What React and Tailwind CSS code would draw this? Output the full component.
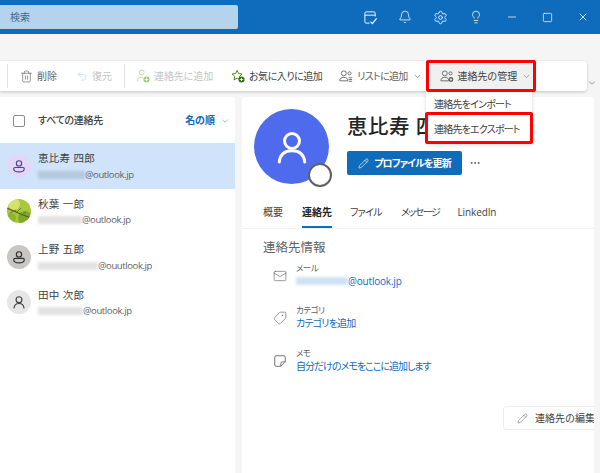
import React from "react";
import { Bell, ChevronDown, Ellipsis, Lightbulb, Mail, Minus, Pencil, Settings, Square, Tag, Trash2, Undo2, X } from "lucide-react";

const font = { fontFamily: '"Open Sans", "Noto Sans CJK JP", sans-serif' };

const PersonIcon = ({ className, strokeWidth = 1.5 }) => (
  <svg viewBox="0 0 24 24" fill="none" stroke="currentColor" strokeWidth={strokeWidth} strokeLinecap="round" className={className}>
    <circle cx="12" cy="8" r="5" />
    <path d="M3.500 22c.5-5 3-7.500 8.500-7.500s8 2.500 8.500 7.500" />
  </svg>
);

const BadgeIcon = ({ className }) => (
  <svg viewBox="0 0 24 24" fill="none" stroke="currentColor" strokeWidth="2" className={className}>
    <circle cx="12" cy="7.500" r="4.500" />
    <path d="M5 14.500h14a2 2 0 0 1 2 2c0 3.500-4 5.500-9 5.500s-9-2-9-5.500a2 2 0 0 1 2-2z" />
  </svg>
);

const PeopleAdd = ({ color, plus, className }) => (
  <svg viewBox="0 0 16 16" fill="none" stroke={color} strokeWidth="1" className={className}>
    <circle cx="6.500" cy="4" r="2.800" />
    <path d="M1.500 14c0-3 1.500-4.500 5-4.500 1 0 1.500.1 2 .3" />
    <circle cx="12" cy="12" r="3.500" fill={plus} stroke="none" />
    <path d="M12 10v4M10 12h4" stroke="#fff" />
  </svg>
);

const StarAdd = ({ className }) => (
  <svg viewBox="0 0 16 16" fill="none" className={className}>
    <path d="M7 1.500l1.700 3.700 4 .5-3 2.700.8 4-3.500-2-3.500 2 .8-4-3-2.700 4-.5z" stroke="#498205" strokeWidth="1.100" strokeLinejoin="round" />
    <circle cx="12" cy="12" r="3.500" fill="#2e6b10" />
    <path d="M12 10v4M10 12h4" stroke="#fff" />
  </svg>
);

const PeopleList = ({ className, gear }) => (
  <svg viewBox="0 0 16 16" fill="none" stroke="#616161" strokeWidth="1" className={className}>
    <circle cx="5.500" cy="5" r="2.800" />
    <path d="M1 13.500c0-2.500 1.500-4 4.500-4s4.500 1.500 4.500 4z" />
    <circle cx="12" cy="5" r="1.800" />
    {gear ? <circle cx="12.500" cy="12" r="2" strokeWidth="1.500" /> : <path d="M11 10h4M11 12h4M11 14h4" />}
  </svg>
);

const NoteCheck = ({ className }) => (
  <svg viewBox="0 0 16 16" fill="none" stroke="currentColor" strokeWidth="1" className={className}>
    <path d="M7 14H3.500A1.500 1.500 0 0 1 2 12.500v-9A1.500 1.500 0 0 1 3.500 2h8A1.500 1.500 0 0 1 13 3.500V7M2 5.500h11" />
    <path d="M8 12.500l2 2 4.500-5.500" strokeWidth="1.200" />
  </svg>
);

const StickyNote = ({ className }) => (
  <svg viewBox="0 0 16 16" fill="none" stroke="currentColor" strokeWidth="1" className={className}>
    <path d="M3.500 2h9A1.500 1.500 0 0 1 14 3.500V9l-5 5H3.500A1.500 1.500 0 0 1 2 12.500v-9A1.500 1.500 0 0 1 3.500 2z" />
    <path d="M14 9h-3.500A1.500 1.500 0 0 0 9 10.500V14" />
  </svg>
);

const LeafPhoto = () => (
  <svg viewBox="0 0 24 24" className="w-full h-full">
    <rect width="24" height="24" fill="#a6c83a" />
    <circle cx="7" cy="5" r="6" fill="#d3e26a" />
    <circle cx="18" cy="19" r="7" fill="#7fa82a" />
    <circle cx="4" cy="19" r="5" fill="#8fb52e" />
    <path d="M0 9l9 4 7 3 8 3" stroke="#5a5f2c" strokeWidth="1.200" fill="none" />
    <path d="M3 14l6-3M10 13l4-4M15 16l4-3" stroke="#6a6b34" strokeWidth="0.800" fill="none" />
  </svg>
);

const Blur = ({ w, color = "bg-[#e2e2e2]" }) => (
  <span className={`inline-block h-[8px] ${w} ${color} blur-[1.5px]`}></span>
);

const contacts = [
  { name: "恵比寿 四郎", blur: "w-[47px]", mail: "@outlook.jp", active: true, avatar: "bg-[#e3d7f6] text-[#4f3f9e]", icon: "badge" },
  { name: "秋葉 一郎", blur: "w-[44px]", mail: "@outlook.jp", avatar: "", icon: "photo" },
  { name: "上野 五郎", blur: "w-[60px]", mail: "@ouutlook.jp", avatar: "bg-[#c8c6c4] text-[#323130]", icon: "badge" },
  { name: "田中 次郎", blur: "w-[45px]", mail: "@outlook.jp", avatar: "bg-[#e6e6e6] text-[#424242]", icon: "person" },
];

const ContactRow = ({ c }) => (
  <div className={`h-[45.5px] flex items-center pl-[7px] ${c.active ? "bg-[#cfe4fa]" : "bg-white"}`}>
    <div className={`w-6 h-6 rounded-full overflow-hidden flex items-center justify-center shrink-0 ${c.avatar}`}>
      {c.icon === "photo" && <LeafPhoto />}
      {c.icon === "badge" && <BadgeIcon className="w-[14px] h-[14px]" />}
      {c.icon === "person" && <PersonIcon className="w-[14px] h-[14px]" strokeWidth={2} />}
    </div>
    <div className="ml-[7px] pt-[2px]">
      <div className="text-[10.5px] leading-[15px] text-[#424242] tracking-[0.3px]">{c.name}</div>
      <div className="flex items-center h-[16px] pt-[1px] text-[9.5px] text-[#616161] tracking-[-0.4px]">
        <Blur w={c.blur} color={c.active ? "bg-[#b5c8dc]" : "bg-[#e2e2e2]"} />
        <span>{c.mail}</span>
      </div>
    </div>
  </div>
);

const ToolItem = ({ icon, label, className = "", chevron, text = "text-[#424242]" }) => (
  <div className={`flex items-center shrink-0 ${className}`}>
    {icon}
    <span className={`ml-[4px] text-[10px] [font-feature-settings:'palt'] ${text}`}>{label}</span>
    {chevron && <ChevronDown className="w-[9px] h-[9px] ml-[5px] text-[#616161]" strokeWidth={1.5} />}
  </div>
);

const InfoRow = ({ icon, label, children, className = "", text = "tracking-[-0.8px]" }) => (
  <div className={`flex ${className}`}>
    <div className="w-[33px] pl-[10px] pt-[7px] text-[#616161]">{icon}</div>
    <div>
      <div className="text-[8.5px] leading-[11px] text-[#616161] tracking-[-0.5px] [font-feature-settings:'palt']">{label}</div>
      <div className={`text-[10px] leading-[16px] text-[#0f6cbd] flex items-center [font-feature-settings:'palt'] ${text}`}>{children}</div>
    </div>
  </div>
);

const Tab = ({ label, active, className = "" }) => (
  <div className={`relative h-[25px] pb-[6px] flex items-center text-[10px] [font-feature-settings:'palt'] ${active ? "text-[#242424] font-semibold" : "text-[#424242]"} ${className}`}>
    {label}
    {active && <div className="absolute left-0 right-0 bottom-0 h-[2px] bg-[#0f6cbd]"></div>}
  </div>
);

export default function App() {
  return (
    <div className="relative w-[600px] h-[473px] overflow-hidden bg-[#f5f5f5]" style={font}>
      <div className="h-[34px] bg-[#0f6cbd] flex items-center text-white">
        <div className="w-[238px] h-[24px] bg-[#b5d3ec] rounded-r-[2px] flex items-center pl-[10px] text-[10px] text-[#3a6a91]">検索</div>
        <div className="ml-[125px] flex items-center">
          <NoteCheck className="w-[15px] h-[15px]" />
          <Bell className="w-[14px] h-[14px] ml-[20px]" strokeWidth={1.3} />
          <Settings className="w-[15px] h-[15px] ml-[21px]" strokeWidth={1.3} />
          <Lightbulb className="w-[14px] h-[14px] ml-[21px]" strokeWidth={1.3} />
          <Minus className="w-[12px] h-[12px] ml-[23px]" strokeWidth={1.5} />
          <Square className="w-[11px] h-[11px] ml-[24px]" strokeWidth={1.5} />
          <X className="w-[12px] h-[12px] ml-[24px]" strokeWidth={1.5} />
        </div>
      </div>

      <div className="mt-[27px] h-[30px] w-[587px] bg-white rounded-r-[4px] shadow-[0_1px_3px_rgba(0,0,0,0.2)] flex items-center">
        <div className="ml-[7px] w-px h-[24px] bg-[#e0e0e0]"></div>
        <ToolItem className="ml-[12px]" icon={<Trash2 className="w-[13px] h-[13px] text-[#616161]" strokeWidth={1.2} />} label="削除" text="text-[#616161]" />
        <ToolItem className="ml-[19px]" icon={<Undo2 className="w-[12px] h-[12px] text-[#b4d6f2]" strokeWidth={1.3} />} label="復元" text="text-[#c4c4c4]" />
        <div className="ml-[12px] w-px h-[24px] bg-[#e0e0e0]"></div>
        <ToolItem className="ml-[11px]" icon={<PeopleAdd color="#b7d39a" plus="#a5c87f" className="w-[14px] h-[14px]" />} label="連絡先に追加" text="text-[#c4c4c4] tracking-[-0.1px]" />
        <ToolItem className="ml-[18px]" icon={<StarAdd className="w-[14px] h-[14px]" />} label="お気に入りに追加" text="text-[#424242] tracking-[-0.5px]" />
        <ToolItem className="ml-[17px]" icon={<PeopleList className="w-[14px] h-[14px]" />} label="リストに追加" chevron text="text-[#616161] tracking-[-0.7px]" />
        <ToolItem className="ml-[8px] bg-[#f0f0f0] h-full pl-[10px] w-[105px]" icon={<PeopleList gear className="w-[14px] h-[14px]" />} label="連絡先の管理" chevron />
      </div>
      <ChevronDown className="absolute left-[587px] top-[78px] w-[10px] h-[10px] text-[#616161]" strokeWidth={1.5} />

      <div className="mt-[6px] flex gap-[7px]">
        <div className="w-[235px] h-[376px] bg-white rounded-tr-[3px]">
          <div className="h-[46px] flex items-center pl-[13px] pt-[1px]">
            <div className="w-[12px] h-[12px] border border-[#8a8a8a] rounded-[2px]"></div>
            <span className="ml-[13px] text-[10px] font-medium text-[#424242] tracking-[-0.3px] [font-feature-settings:'palt']">すべての連絡先</span>
            <span className="ml-auto text-[10px] font-semibold text-[#0f6cbd] [font-feature-settings:'palt']">名の順</span>
            <ChevronDown className="w-[10px] h-[10px] ml-[5px] mr-[5px] text-[#5f9ad0]" strokeWidth={1.5} />
          </div>
          {contacts.map((c) => <ContactRow key={c.name} c={c} />)}
        </div>

        <div className="w-[352px] h-[376px] bg-white rounded-t-[3px] overflow-hidden">
          <div className="relative h-[106px]">
            <div className="absolute left-[12px] top-[12px] w-[75px] h-[75px] rounded-full bg-[#4f6bed] flex items-center justify-center text-white">
              <PersonIcon className="w-[36px] h-[36px]" strokeWidth={2} />
            </div>
            <div className="absolute left-[66px] top-[66px] w-[24px] h-[24px] rounded-full bg-white border-[2px] border-[#616161]"></div>
            <div className="absolute left-[105px] top-[12px] text-[20.5px] leading-[34px] font-medium text-[#242424] whitespace-nowrap tracking-[0.5px]">恵比寿 四郎</div>
            <div className="absolute left-[105px] top-[54px] flex items-center">
              <div className="w-[115px] h-[24px] rounded-[2px] bg-[#0f6cbd] text-white flex items-center justify-center text-[10px] font-semibold tracking-[-0.9px] [font-feature-settings:'palt']">
                <Pencil className="w-[11px] h-[11px] mr-[5px]" strokeWidth={1.4} />
                プロファイルを更新
              </div>
              <Ellipsis className="w-[12px] h-[12px] ml-[7px] text-[#424242]" strokeWidth={1.5} />
            </div>
          </div>

          <div className="h-[26px] flex items-start pl-[21px] border-b border-[#f0f0f0]">
            <Tab label="概要" />
            <Tab label="連絡先" active className="ml-[19px]" />
            <Tab label="ファイル" className="ml-[18px] tracking-[-0.7px]" />
            <Tab label="メッセージ" className="ml-[19px] tracking-[-1.4px]" />
            <Tab label="LinkedIn" className="ml-[18px] tracking-[-0.1px]" />
          </div>

          <div className="pl-[21px]">
            <div className="mt-[10px] text-[12.5px] leading-[18px] text-[#616161]">連絡先情報</div>
            <InfoRow className="mt-[5px]" icon={<Mail className="w-[14px] h-[14px]" strokeWidth={1.1} />} label="メール">
              <Blur w="w-[52px]" color="bg-[#cfe2f3]" />
              <span className="tracking-[-0.2px]">@outlook.jp</span>
            </InfoRow>
            <InfoRow className="mt-[15px]" icon={<Tag className="w-[14px] h-[14px] -scale-x-100" strokeWidth={1.1} />} label="カテゴリ">
              カテゴリを追加
            </InfoRow>
            <InfoRow className="mt-[16px]" text="tracking-[-1px]" icon={<StickyNote className="w-[14px] h-[14px]" />} label="メモ">
              自分だけのメモをここに追加します
            </InfoRow>
          </div>

          <div className="ml-[261px] mt-[32px] w-[100px] h-[24px] rounded-[3px] border border-[#ededed] flex items-center pl-[13px] text-[10px] text-[#424242] whitespace-nowrap">
            <Pencil className="w-[11px] h-[11px] mr-[7px] text-[#616161]" strokeWidth={1.2} />
            連絡先の編集
          </div>
        </div>
      </div>

      <div className="absolute left-[426px] top-[91px] w-[106px] h-[52px] bg-white shadow-[0_2px_4px_rgba(0,0,0,0.15)] text-[10px] text-[#424242] tracking-[-0.8px] [font-feature-settings:'palt']">
        <div className="h-[26px] flex items-center pl-[8px]">連絡先をインポート</div>
        <div className="h-[24px] flex items-center pl-[8px]">連絡先をエクスポート</div>
      </div>
      <div className="absolute left-[426px] top-[60px] w-[110px] h-[32px] border-[3px] border-[#ff0000] rounded-[2px]"></div>
      <div className="absolute left-[425px] top-[112px] w-[108px] h-[32px] border-[3px] border-[#ff0000] rounded-[2px]"></div>
    </div>
  );
}
